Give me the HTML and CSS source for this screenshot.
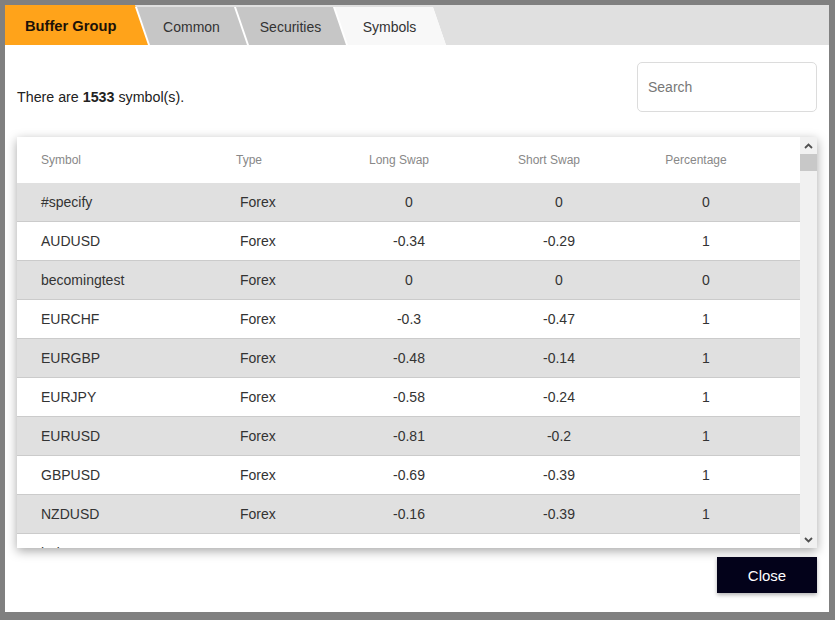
FILE: index.html
```html
<!DOCTYPE html>
<html>
<head>
<meta charset="utf-8">
<link rel="stylesheet" href="styles.css">
</head>
<body>
<div class="modal">
  <div class="tabs">
    <div class="tab tab-first"><span>Buffer Group</span></div>
    <div class="tab tab-gray"><span>Common</span></div>
    <div class="tab tab-gray"><span>Securities</span></div>
    <div class="tab tab-light"><span>Symbols</span></div>
  </div>
  <div class="content">
    <div class="toolbar">
      <div class="count">There are <b>1533</b> symbol(s).</div>
      <input class="search" type="text" placeholder="Search">
    </div>
    <div class="card">
      <div class="main">
        <div class="row head">
          <div class="c1">Symbol</div>
          <div class="c2">Type</div>
          <div class="cn">Long Swap</div>
          <div class="cn">Short Swap</div>
          <div class="cn">Percentage</div>
          <div></div>
        </div>
        <div class="body">
          <div class="row data odd"><div class="c1">#specify</div><div class="c2">Forex</div><div class="cn">0</div><div class="cn">0</div><div class="cn">0</div><div></div></div>
          <div class="row data"><div class="c1">AUDUSD</div><div class="c2">Forex</div><div class="cn">-0.34</div><div class="cn">-0.29</div><div class="cn">1</div><div></div></div>
          <div class="row data odd"><div class="c1">becomingtest</div><div class="c2">Forex</div><div class="cn">0</div><div class="cn">0</div><div class="cn">0</div><div></div></div>
          <div class="row data"><div class="c1">EURCHF</div><div class="c2">Forex</div><div class="cn">-0.3</div><div class="cn">-0.47</div><div class="cn">1</div><div></div></div>
          <div class="row data odd"><div class="c1">EURGBP</div><div class="c2">Forex</div><div class="cn">-0.48</div><div class="cn">-0.14</div><div class="cn">1</div><div></div></div>
          <div class="row data"><div class="c1">EURJPY</div><div class="c2">Forex</div><div class="cn">-0.58</div><div class="cn">-0.24</div><div class="cn">1</div><div></div></div>
          <div class="row data odd"><div class="c1">EURUSD</div><div class="c2">Forex</div><div class="cn">-0.81</div><div class="cn">-0.2</div><div class="cn">1</div><div></div></div>
          <div class="row data"><div class="c1">GBPUSD</div><div class="c2">Forex</div><div class="cn">-0.69</div><div class="cn">-0.39</div><div class="cn">1</div><div></div></div>
          <div class="row data odd"><div class="c1">NZDUSD</div><div class="c2">Forex</div><div class="cn">-0.16</div><div class="cn">-0.39</div><div class="cn">1</div><div></div></div>
          <div class="row data"><div class="c1">ladytest</div><div class="c2">Forex</div><div class="cn">0</div><div class="cn">0</div><div class="cn">0</div><div></div></div>
        </div>
      </div>
      <div class="scrollbar">
        <div class="sb-btn">
          <svg width="9" height="6" viewBox="0 0 9 6"><path d="M1 5 L4.5 1.5 L8 5" fill="none" stroke="#505050" stroke-width="1.8"/></svg>
        </div>
        <div class="sb-thumb"></div>
        <div class="sb-track"></div>
        <div class="sb-btn">
          <svg width="9" height="6" viewBox="0 0 9 6"><path d="M1 1 L4.5 4.5 L8 1" fill="none" stroke="#505050" stroke-width="1.8"/></svg>
        </div>
      </div>
    </div>
    <div class="footer">
      <button class="close">Close</button>
    </div>
  </div>
</div>
</body>
</html>
```

FILE: styles.css
```css
html, body {
  margin: 0;
  padding: 0;
}
body {
  background: #808080;
  font-family: "Liberation Sans", Arial, sans-serif;
  color: #333;
  width: 835px;
  height: 620px;
  overflow: hidden;
  padding: 5px;
  box-sizing: border-box;
}
.modal {
  width: 824px;
  height: 607px;
  background: #fff;
  display: flex;
  flex-direction: column;
}
.tabs {
  height: 40px;
  background: #e0e0e0;
  display: flex;
  align-items: flex-end;
  flex-shrink: 0;
}
.tab {
  position: relative;
  height: 38px;
  width: 113px;
  margin-left: -14px;
  background: #fff;
  clip-path: polygon(0 0, calc(100% - 13px) 0, 100% 100%, 13px 100%);
  display: flex;
  align-items: center;
  justify-content: center;
  font-size: 14px;
  color: #333;
}
.tab::before {
  content: "";
  position: absolute;
  inset: 0;
  clip-path: polygon(2px 0, calc(100% - 13px) 0, 100% 100%, 15px 100%);
}
.tab span {
  position: relative;
  padding-top: 1px;
}
.tab-gray::before { background: #c6c6c6; }
.tab-light::before { background: #f8f8f8; }
.tab-first {
  margin-left: 0;
  width: 144px;
  height: 40px;
  clip-path: polygon(0 0, 130px 0, 100% 100%, 0 100%);
  font-weight: bold;
  font-size: 14.7px;
  color: #1c1208;
  justify-content: flex-start;
  padding-left: 20px;
  box-sizing: border-box;
}
.tab-first::before {
  background: #ffa31a;
  clip-path: none;
}
.content {
  flex: 1;
  padding: 17px 12px 19px 12px;
  display: flex;
  flex-direction: column;
}
.toolbar {
  display: flex;
  justify-content: space-between;
  align-items: flex-start;
}
.count {
  font-size: 14.25px;
  line-height: 18px;
  margin-top: 26px;
  color: #222;
}
.count b {
  color: #222;
}
.search {
  width: 180px;
  height: 50px;
  box-sizing: border-box;
  border: 1px solid #dcdcdc;
  border-radius: 5px;
  padding: 0 10px;
  font-family: "Liberation Sans", Arial, sans-serif;
  font-size: 14px;
  color: #333;
  outline: none;
}
.search::placeholder {
  color: #777;
}
.card {
  margin-top: 25px;
  height: 411px;
  display: flex;
  background: #fff;
  box-shadow: 0 3px 10px rgba(0, 0, 0, 0.35);
}
.main {
  width: 783px;
  display: flex;
  flex-direction: column;
  overflow: hidden;
}
.row {
  display: grid;
  grid-template-columns: 200px 117px 150px 150px 144px 22px;
  align-items: center;
}
.head {
  height: 46px;
  font-size: 12px;
  color: #888;
  flex-shrink: 0;
}
.head .c1 { padding-left: 24px; }
.head .c2 { padding-left: 19px; }
.head .cn { text-align: center; padding-right: 20px; }
.body {
  flex: 1;
  overflow: hidden;
}
.data {
  height: 38px;
  border-bottom: 1px solid #cbcbcb;
  font-size: 14px;
  color: #333;
  background: #fff;
}
.data.odd {
  background: #e0e0e0;
}
.data .c1 { padding-left: 24px; }
.data .c2 { padding-left: 23px; }
.data .cn { text-align: center; }
.scrollbar {
  width: 17px;
  background: #f1f1f1;
  display: flex;
  flex-direction: column;
}
.sb-btn {
  height: 17px;
  display: flex;
  align-items: center;
  justify-content: center;
}
.sb-thumb {
  height: 17px;
  background: #c8c8c8;
}
.sb-track {
  flex: 1;
}
.footer {
  display: flex;
  justify-content: flex-end;
  margin-top: 9px;
}
.close {
  width: 100px;
  height: 36px;
  border: none;
  background: #03021a;
  color: #fff;
  font-family: "Liberation Sans", Arial, sans-serif;
  font-size: 15px;
  box-shadow: 0 2px 4px rgba(0, 0, 0, 0.3);
}
```
